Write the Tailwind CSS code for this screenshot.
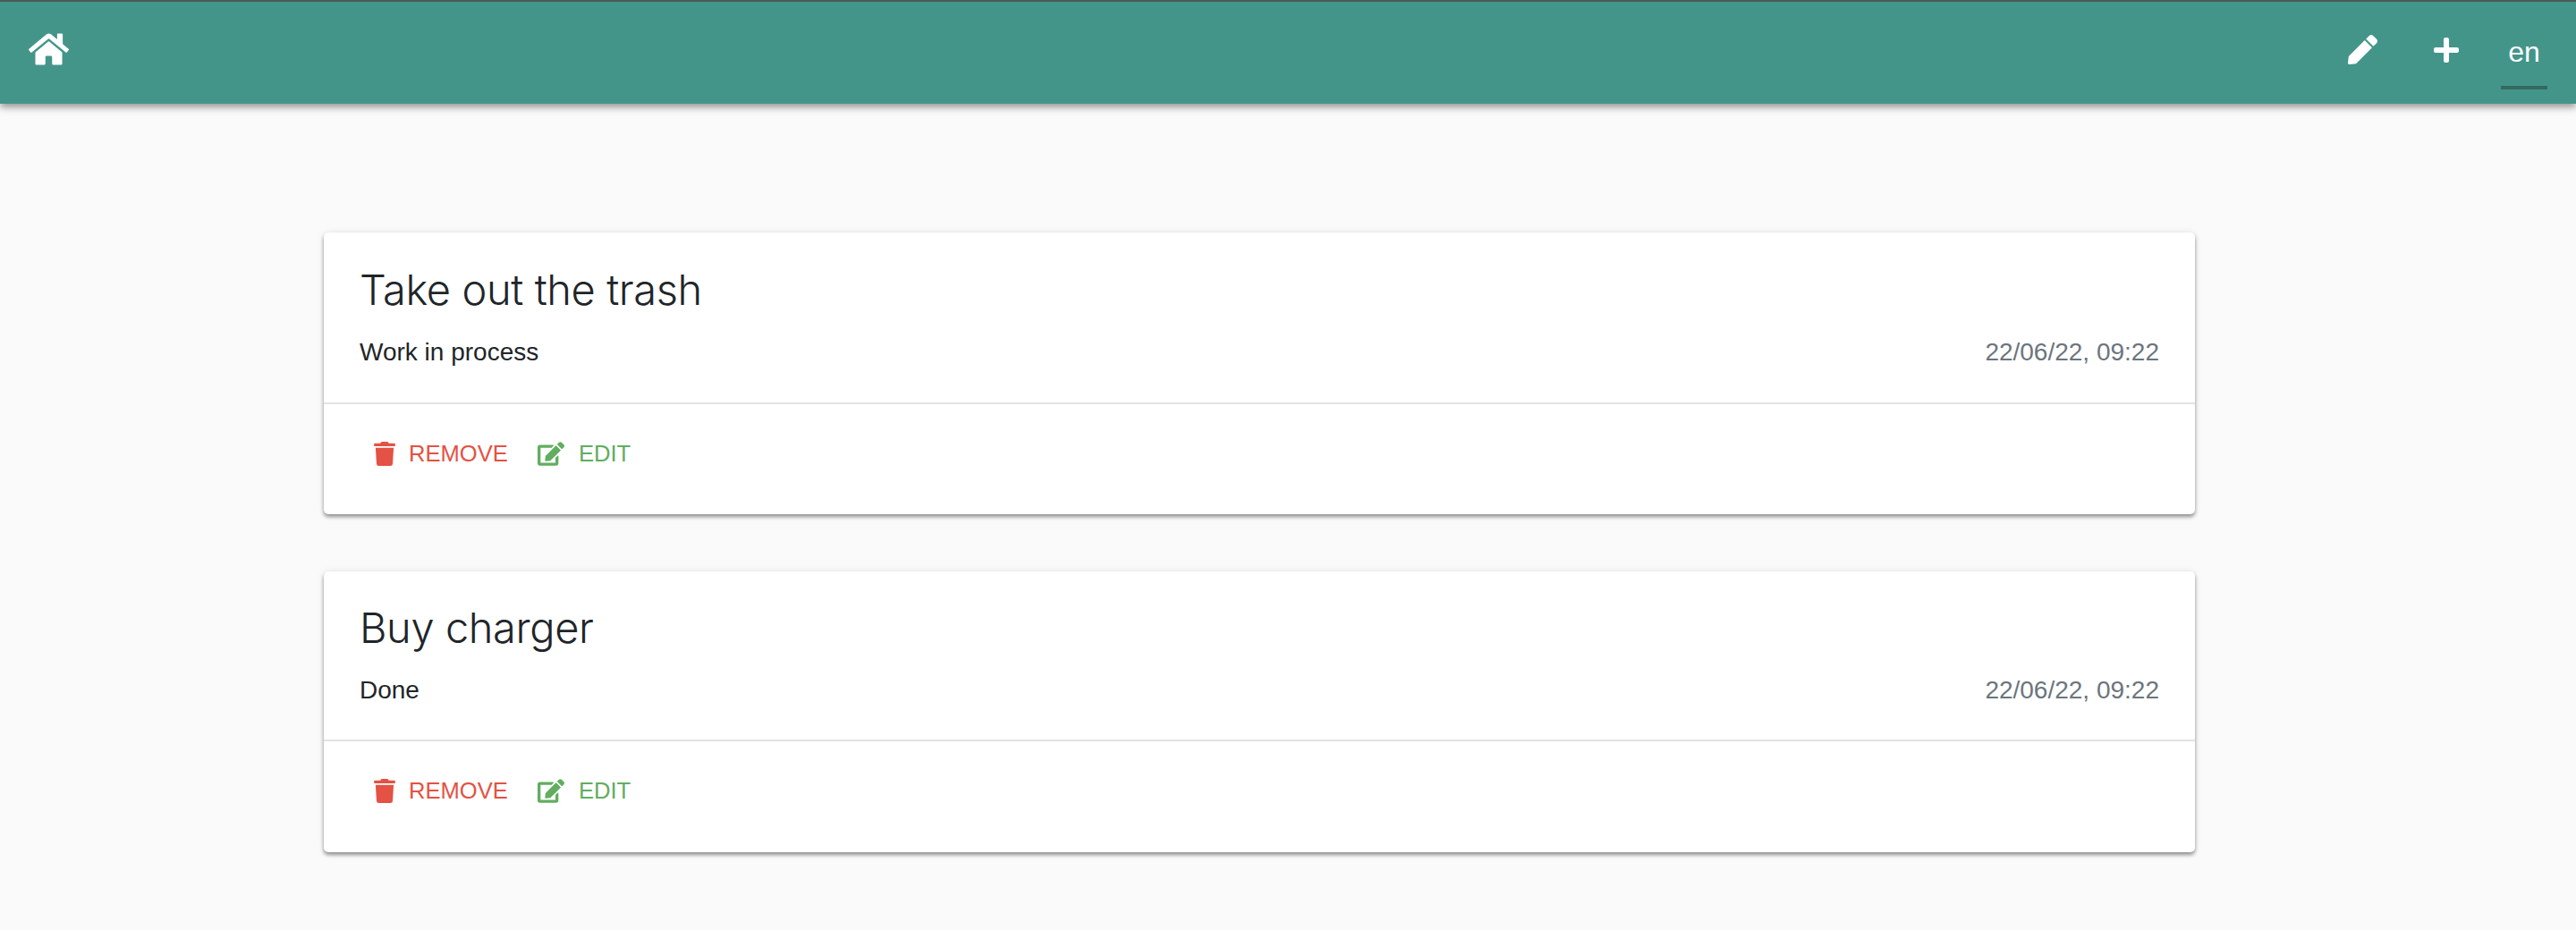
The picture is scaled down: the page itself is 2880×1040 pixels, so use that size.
<!DOCTYPE html>
<html lang="en">
<head>
    <meta charset="UTF-8">
    <title>Todo list</title>
    <script src="https://cdn.jsdelivr.net/npm/@tailwindcss/browser@4"></script>
</head>
<body class="bg-[#fafafa] h-[1040px] overflow-hidden font-['Liberation_Sans',Arial,sans-serif] text-[#212529]">
    <!-- Navbar -->
    <nav class="h-[116px] bg-[#43958a] border-t-2 border-[#4a5a55] flex items-start justify-between shadow-[0_4px_8px_rgba(0,0,0,0.4)] relative">
        <a href="#" class="ml-[32px] mt-[33px]">
            <svg class="w-[45px] h-[40px] block" viewBox="0 0 576 512" fill="#fff"><path d="M280.37 148.26L96 300.11V464a16 16 0 0 0 16 16l112.06-.29a16 16 0 0 0 15.92-16V368a16 16 0 0 1 16-16h64a16 16 0 0 1 16 16v95.64a16 16 0 0 0 16 16.05L464 480a16 16 0 0 0 16-16V300L295.67 148.26a12.19 12.19 0 0 0-15.3 0zM571.6 251.47L488 182.56V44.05a12 12 0 0 0-12-12h-56a12 12 0 0 0-12 12v72.61L318.47 43a48 48 0 0 0-61 0L4.34 251.47a12 12 0 0 0-1.6 16.9l25.5 31A12 12 0 0 0 45.15 301l235.22-193.74a12.19 12.19 0 0 1 15.3 0L530.9 301a12 12 0 0 0 16.9-1.6l25.5-31a12 12 0 0 0-1.7-16.93z"/></svg>
        </a>
        <div class="flex items-start">
            <a href="#" class="mt-[37px]">
                <svg class="w-[33px] h-[33px] block" viewBox="0 0 512 512" fill="#fff"><path d="M290.74 93.24l128.02 128.02-277.99 277.99-114.14 12.6C11.35 513.54-1.56 500.62.14 485.34l12.7-114.22 277.9-278.88zm207.2-19.06l-60.11-60.11c-18.75-18.75-49.16-18.75-67.91 0l-56.55 56.55 128.02 128.02 56.55-56.55c18.75-18.76 18.75-49.16 0-67.91z"/></svg>
            </a>
            <a href="#" class="ml-[63px] mt-[38px]">
                <svg class="w-[28px] h-[32px] block" viewBox="0 0 448 512" fill="#fff"><path d="M416 208H272V64c0-17.67-14.33-32-32-32h-32c-17.67 0-32 14.33-32 32v144H32c-17.67 0-32 14.33-32 32v32c0 17.67 14.33 32 32 32h144v144c0 17.67 14.33 32 32 32h32c17.67 0 32-14.33 32-32V304h144c17.67 0 32-14.33 32-32v-32c0-17.67-14.33-32-32-32z"/></svg>
            </a>
            <div class="ml-[47px] mr-[32px] w-[52px] h-[98px] border-b-4 border-[#35695f] text-white text-[32px] leading-[36px] pt-[38px] text-center">en</div>
        </div>
    </nav>

    <main class="w-[2092px] ml-[362px] pt-[144px] flex flex-col gap-[64px]">
        <!-- Card 1 -->
        <section class="h-[315px] bg-white rounded-[5px] shadow-[0_3px_4px_rgba(0,0,0,0.4),0_0_8px_rgba(0,0,0,0.08)]">
            <div class="h-[192px] border-b-2 border-[#e3e3e3] px-[40px] pt-[34px]">
                <h2 class="font-['Inter',sans-serif] text-[47px] tracking-[-0.4px] leading-[60px] font-light text-[#212529]">Take out the trash</h2>
                <div class="flex justify-between mt-[20px] text-[28px] leading-[40px]">
                    <span>Work in process</span>
                    <span class="text-[#6c757d]">22/06/22, 09:22</span>
                </div>
            </div>
            <div class="flex items-center pl-[56px] pt-[35px]">
                <button class="flex items-center text-[#e35244] text-[25.6px] leading-[40px]">
                    <svg class="w-[24px] h-[27px] mr-[15px]" viewBox="0 0 448 512" fill="currentColor"><path d="M432 32H312l-9.4-18.7A24 24 0 0 0 281.1 0H166.8a23.72 23.72 0 0 0-21.4 13.3L136 32H16A16 16 0 0 0 0 48v32a16 16 0 0 0 16 16h416a16 16 0 0 0 16-16V48a16 16 0 0 0-16-16zM53.2 467a48 48 0 0 0 47.9 45h245.8a48 48 0 0 0 47.9-45L416 128H32z"/></svg>
                    REMOVE
                </button>
                <button class="flex items-center text-[#62ad5f] text-[25.6px] leading-[40px] ml-[33px]">
                    <svg class="w-[30px] h-[27px] mr-[16px]" viewBox="0 0 576 512" fill="currentColor"><path d="M402.6 83.2l90.2 90.2c3.8 3.8 3.8 10 0 13.8L274.4 405.6l-92.8 10.3c-12.4 1.4-22.9-9.1-21.5-21.5l10.3-92.8L388.8 83.2c3.8-3.8 10-3.8 13.8 0zm162-22.9l-48.8-48.8c-15.2-15.2-39.9-15.2-55.2 0l-35.4 35.4c-3.8 3.8-3.8 10 0 13.8l90.2 90.2c3.8 3.8 10 3.8 13.8 0l35.4-35.4c15.2-15.3 15.2-40 0-55.2zM384 346.2V448H64V128h229.8c3.2 0 6.2-1.3 8.5-3.5l40-40c7.6-7.6 2.2-20.5-8.5-20.5H48C21.5 64 0 85.5 0 112v352c0 26.5 21.5 48 48 48h352c26.5 0 48-21.5 48-48V306.2c0-10.7-12.9-16-20.5-8.5l-40 40c-2.2 2.3-3.5 5.3-3.5 8.5z"/></svg>
                    EDIT
                </button>
            </div>
        </section>

        <!-- Card 2 -->
        <section class="h-[314px] bg-white rounded-[5px] shadow-[0_3px_4px_rgba(0,0,0,0.4),0_0_8px_rgba(0,0,0,0.08)]">
            <div class="h-[190px] border-b-2 border-[#e3e3e3] px-[40px] pt-[33px]">
                <h2 class="font-['Inter',sans-serif] text-[47px] tracking-[-0.4px] leading-[60px] font-light text-[#212529]">Buy charger</h2>
                <div class="flex justify-between mt-[20px] text-[28px] leading-[40px]">
                    <span>Done</span>
                    <span class="text-[#6c757d]">22/06/22, 09:22</span>
                </div>
            </div>
            <div class="flex items-center pl-[56px] pt-[35px]">
                <button class="flex items-center text-[#e35244] text-[25.6px] leading-[40px]">
                    <svg class="w-[24px] h-[27px] mr-[15px]" viewBox="0 0 448 512" fill="currentColor"><path d="M432 32H312l-9.4-18.7A24 24 0 0 0 281.1 0H166.8a23.72 23.72 0 0 0-21.4 13.3L136 32H16A16 16 0 0 0 0 48v32a16 16 0 0 0 16 16h416a16 16 0 0 0 16-16V48a16 16 0 0 0-16-16zM53.2 467a48 48 0 0 0 47.9 45h245.8a48 48 0 0 0 47.9-45L416 128H32z"/></svg>
                    REMOVE
                </button>
                <button class="flex items-center text-[#62ad5f] text-[25.6px] leading-[40px] ml-[33px]">
                    <svg class="w-[30px] h-[27px] mr-[16px]" viewBox="0 0 576 512" fill="currentColor"><path d="M402.6 83.2l90.2 90.2c3.8 3.8 3.8 10 0 13.8L274.4 405.6l-92.8 10.3c-12.4 1.4-22.9-9.1-21.5-21.5l10.3-92.8L388.8 83.2c3.8-3.8 10-3.8 13.8 0zm162-22.9l-48.8-48.8c-15.2-15.2-39.9-15.2-55.2 0l-35.4 35.4c-3.8 3.8-3.8 10 0 13.8l90.2 90.2c3.8 3.8 10 3.8 13.8 0l35.4-35.4c15.2-15.3 15.2-40 0-55.2zM384 346.2V448H64V128h229.8c3.2 0 6.2-1.3 8.5-3.5l40-40c7.6-7.6 2.2-20.5-8.5-20.5H48C21.5 64 0 85.5 0 112v352c0 26.5 21.5 48 48 48h352c26.5 0 48-21.5 48-48V306.2c0-10.7-12.9-16-20.5-8.5l-40 40c-2.2 2.3-3.5 5.3-3.5 8.5z"/></svg>
                    EDIT
                </button>
            </div>
        </section>
    </main>
</body>
</html>
